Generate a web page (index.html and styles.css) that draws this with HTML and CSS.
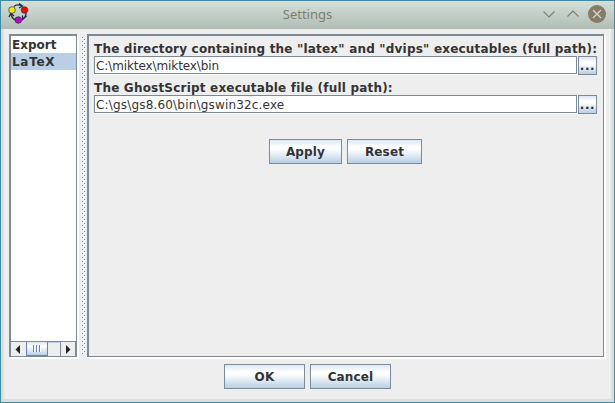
FILE: index.html
```html
<!DOCTYPE html>
<html lang="en">
<head>
<meta charset="utf-8">
<title>Settings</title>
<link rel="stylesheet" href="styles.css">
</head>
<body>
<div class="window">
  <header class="titlebar">
    <svg class="logo" width="22" height="22" viewBox="0 0 22 22">
      <g fill="none" stroke="#252a50" stroke-width="1.3">
        <path d="M6 3.500Q9 .5 14 3M11 .5l3.500 2.500-3.500 2M18 10q0 4-3 6M18.500 13l-4 3.500v-4M8 17q-4-1-5-6M1 14l2-4 3 3"/>
      </g>
      <g stroke="#303040" stroke-width=".7">
        <circle cx="4" cy="7" r="3.300" fill="#f4ee10"/>
        <circle cx="16.500" cy="7" r="3.300" fill="#f00808"/>
        <circle cx="10.300" cy="17" r="3.300" fill="#b808c0"/>
      </g>
    </svg>
    <span class="title">Settings</span>
    <svg class="controls" width="66" height="20" viewBox="0 0 66 20">
      <path d="M1.500 7.500l5.500 5.500 5.500-5.500M25.500 12.500l5.500-5.500 5.500 5.500" fill="none" stroke="#857b6b" stroke-width="1.100"/>
      <circle cx="55" cy="10" r="9" fill="#857b6b"/>
      <path d="M51 6l8 8M59 6l-8 8" stroke="#d5dbd4" stroke-width="1.200"/>
    </svg>
  </header>
  <main class="content">
    <div class="split">
      <nav class="sidebar">
        <ul class="list">
          <li>Export</li>
          <li class="selected">LaTeX</li>
        </ul>
        <div class="scrollbar">
          <svg class="arrow" width="15" height="14" viewBox="0 0 15 14"><path d="M9 3v9L4.500 7.500z" fill="#222"/></svg>
          <div class="thumb"><i></i><i></i><i></i></div>
          <div class="track"></div>
          <svg class="arrow" width="14" height="14" viewBox="0 0 14 14"><path d="M5 3v9l4.500-4.500z" fill="#222"/></svg>
        </div>
      </nav>
      <svg class="divider" width="6" height="318" shape-rendering="crispEdges">
        <defs>
          <pattern id="bumps" width="4" height="4" patternUnits="userSpaceOnUse">
            <path d="M0 0h1v1H0zM2 2h1v1H2z" fill="#7a8a99"/>
            <path d="M1 1h1v1H1zM3 3h1v1H3z" fill="#fff"/>
          </pattern>
        </defs>
        <rect width="4" height="318" fill="url(#bumps)"/>
      </svg>
      <section class="panel">
        <label class="label">The directory containing the "latex" and "dvips" executables (full path):</label>
        <div class="row"><div class="field latex-path">C:\miktex\miktex\bin</div><button class="browse">...</button></div>
        <label class="label second">The GhostScript executable file (full path):</label>
        <div class="row"><div class="field">C:\gs\gs8.60\bin\gswin32c.exe</div><button class="browse">...</button></div>
        <div class="actions"><button class="apply">Apply</button><button class="reset">Reset</button></div>
      </section>
    </div>
    <footer class="footer"><button>OK</button><button>Cancel</button></footer>
  </main>
</div>
</body>
</html>
```

FILE: styles.css
```css
* { box-sizing: border-box; }
body { margin: 0; font: 12px/17px "DejaVu Sans", sans-serif; color: #333; }
.window {
  width: 615px; height: 403px;
  display: flex; flex-direction: column;
  border: 1px solid #4189a5;
  background: #dfdfda;
}
.titlebar {
  height: 28px; flex: none;
  display: grid; grid-template-columns: 80px 1fr 80px; align-items: center;
  background: linear-gradient(#d3e0d8, #b0bcb5);
}
.logo { margin-left: 7px; margin-top: -2px; }
.title { text-align: center; color: #857b6b; font: 13px/20px "Noto Sans", sans-serif; margin-top: -3px; }
.controls { justify-self: end; margin-right: 6px; margin-top: -2px; }
.content { flex: 1; margin: 0 3px 3px; padding: 5px 5px 0; background: #eee; }
.split { display: flex; height: 325px; }
.sidebar {
  width: 68px; height: 323px;
  display: flex; flex-direction: column; flex: none;
  border: solid #7a8a99; border-width: 2px 1px 1px 2px;
  box-shadow: 1px 1px #fff, 2px 2px #fff;
  background: #fff; font-weight: bold;
}
.list { list-style: none; margin: 0; padding: 0; flex: 1; }
.list li { height: 17px; padding-left: 1px; line-height: 19px; }
.list .selected { background: #b8cfe5; letter-spacing: .7px; }
.scrollbar {
  height: 15px; display: flex; background: #eee;
  border: solid #7a8a99; border-width: 1px 1px 0 0;
}
.arrow { flex: none; }
.thumb {
  width: 22px; display: flex; justify-content: center; gap: 1px; padding: 3px 0;
  border: 1px solid #6382bf; border-top: 0;
  background: linear-gradient(#dce7f2, #fff 35%, #b8cfe5);
}
.thumb i { width: 2px; border-left: 1px solid #6382bf; border-right: 1px solid #fff; }
.track { flex: 1; border-top: 1px solid #b8cfe5; border-right: 1px solid #7a8a99; }
.divider { display: block; flex: none; margin: 3px 0 0 5px; }
.panel {
  width: 517px; height: 323px; flex: none; margin-left: -1px; padding: 4px 5px 0 5px;
  border: solid #7a8a99; border-width: 2px 1px 1px 2px;
  box-shadow: 1px 1px #fff, 2px 2px #fff;
}
.label { display: block; height: 16px; line-height: 19px; white-space: nowrap; font-weight: bold; letter-spacing: .2px; }
.second { margin-top: 4px; }
.row { display: flex; gap: 1px; height: 19px; }
.field {
  width: 483px; height: 18px; padding-left: 1px; line-height: 18px; letter-spacing: .18px;
  border: 1px solid #7a8a99; background: #fff; box-shadow: 1px 1px #fff;
}
.latex-path { letter-spacing: -.1px; }
button {
  height: 25px; padding: 2px 0 0; border: 1px solid #7a8a99; border-radius: 0;
  background: linear-gradient(#dce7f3, #fff 30%, #fff 40%, #b8cfe5);
  color: #333; font: bold 12px/17px "DejaVu Sans", sans-serif; letter-spacing: .15px;
}
.browse { width: 19px; height: 19px; line-height: 15px; letter-spacing: .6px; }
.actions { display: flex; gap: 5px; margin: 25px 0 0 175px; }
.apply { width: 73px; }
.reset { width: 75px; }
.footer { display: flex; gap: 5px; margin: 5px 0 0 215px; }
.footer button { width: 81px; }
```
